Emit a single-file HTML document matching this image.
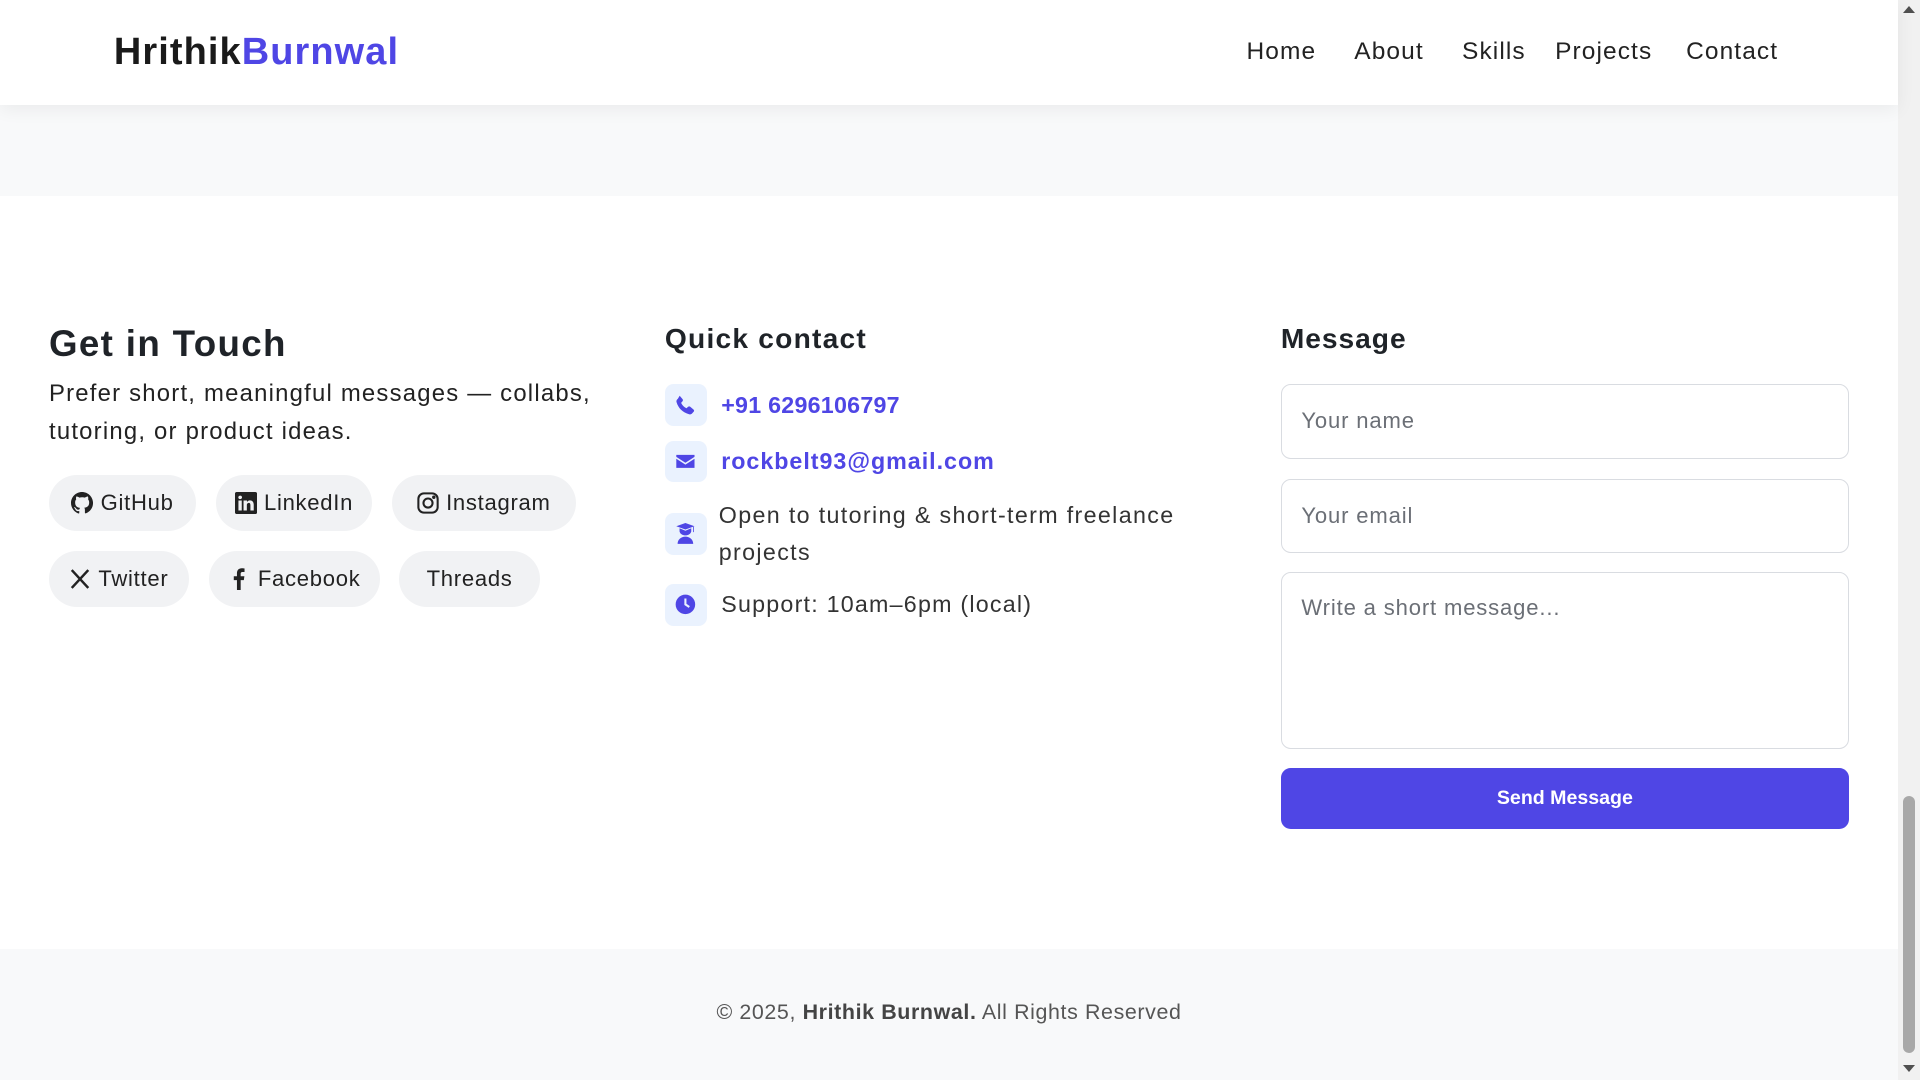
<!DOCTYPE html>
<html><head><meta charset="utf-8"><style>
html{zoom:1.22449}
*{box-sizing:border-box;margin:0;padding:0}
body{width:1568px;height:882px;overflow:hidden;position:relative;font-family:"Liberation Sans",sans-serif;color:#1f2328;background:#fff;letter-spacing:.6px}
.a{position:absolute}
header{position:absolute;left:0;top:0;width:1550px;height:86px;background:#fff;box-shadow:0 4px 14px rgba(0,0,0,.06);z-index:2}
.logo{left:93px;top:25px;font-size:31px;font-weight:bold;color:#1a1a1a;letter-spacing:.9px}
.logo span{color:#4f46e5}
nav a{position:absolute;top:31px;font-size:20px;color:#222;text-decoration:none;letter-spacing:.9px}
.chip{position:absolute;height:46px;border-radius:23px;background:#f1f2f4;font-size:18px;display:flex;align-items:center;justify-content:center;gap:6px;color:#222}
.chip svg{width:18px;height:18px}
.ib{position:absolute;left:543px;width:34px;height:34px;border-radius:7px;background:#eaf2fe;display:flex;align-items:center;justify-content:center}
.ib svg{width:17px;height:17px;fill:#4f46e5}
.inp{position:absolute;left:1046px;width:464px;border:1px solid #d9dce1;border-radius:8px;font-size:18px;color:#6b6f76;padding:0 16px;letter-spacing:.7px}
</style></head><body>
<header>
<div class="a logo">Hrithik<span>Burnwal</span></div>
<nav><a style="left:1018px">Home</a><a style="left:1106px">About</a><a style="left:1194px">Skills</a><a style="left:1270px">Projects</a><a style="left:1377px">Contact</a></nav>
</header>
<div class="a" style="left:0;top:86px;width:1550px;height:74px;background:#f8f9fa"></div>

<div class="a" style="left:40px;top:264px;font-size:30px;font-weight:bold;color:#1f2328;letter-spacing:1.1px">Get in Touch</div>
<div class="a" style="left:40px;top:306px;width:470px;font-size:19.5px;line-height:31px;color:#222;letter-spacing:1px">Prefer short, meaningful messages — collabs, tutoring, or product ideas.</div>

<div class="chip" style="left:40px;top:388px;width:120px"><svg viewBox="0 0 16 16"><path fill="#222" d="M8 0C3.6 0 0 3.6 0 8c0 3.5 2.3 6.5 5.5 7.6.4.1.5-.2.5-.4v-1.4c-2.2.5-2.7-1-2.7-1-.4-.9-.9-1.2-.9-1.2-.7-.5.1-.5.1-.5.8.1 1.2.8 1.2.8.7 1.3 1.9.9 2.4.7.1-.5.3-.9.5-1.1-1.8-.2-3.6-.9-3.6-4 0-.9.3-1.6.8-2.1-.1-.2-.4-1 .1-2.1 0 0 .7-.2 2.2.8.6-.2 1.3-.3 2-.3s1.4.1 2 .3c1.5-1 2.2-.8 2.2-.8.4 1.1.2 1.9.1 2.1.5.6.8 1.3.8 2.1 0 3.1-1.9 3.7-3.6 3.9.3.3.5.8.5 1.5v2.2c0 .2.1.5.6.4C13.7 14.5 16 11.5 16 8c0-4.4-3.6-8-8-8z"/></svg>GitHub</div>
<div class="chip" style="left:176px;top:388px;width:128px"><svg viewBox="0 0 16 16"><path fill="#222" d="M0 1.1C0 .5.5 0 1.2 0h13.6c.7 0 1.2.5 1.2 1.1v13.8c0 .6-.5 1.1-1.2 1.1H1.2C.5 16 0 15.5 0 14.9zm4.9 12.3V6.2H2.5v7.2zM3.7 5.2c.8 0 1.4-.6 1.4-1.3 0-.7-.5-1.3-1.3-1.3S2.4 3.2 2.4 3.9c0 .7.5 1.3 1.3 1.3zm4.9 8.2v-4c0-.2 0-.4.1-.6.2-.4.6-.9 1.3-.9.9 0 1.2.7 1.2 1.7v3.8h2.4V9.3c0-2.2-1.2-3.2-2.7-3.2-1.3 0-1.8.7-2.2 1.2V6.2H6.2v7.2z"/></svg>LinkedIn</div>
<div class="chip" style="left:320px;top:388px;width:150px"><svg viewBox="0 0 16 16" fill="none" stroke="#222" stroke-width="1.5"><rect x="1" y="1" width="14" height="14" rx="4"/><circle cx="8" cy="8" r="3.3"/><circle cx="12.2" cy="3.8" r=".5" fill="#222"/></svg>Instagram</div>
<div class="chip" style="left:40px;top:450px;width:114px"><svg viewBox="0 0 16 16"><path d="M2 1.5l12 13M14 1.5l-12 13" stroke="#222" stroke-width="1.8"/></svg>Twitter</div>
<div class="chip" style="left:171px;top:450px;width:139px"><svg viewBox="0 0 16 16"><path fill="#222" d="M9.2 16V8.8h2.3l.4-2.8H9.2V4.3c0-.8.3-1.4 1.4-1.4H12V.4C11.7.3 10.9.2 10 .2 7.9.2 6.5 1.5 6.5 3.8V6H4.2v2.8h2.3V16z"/></svg>Facebook</div>
<div class="chip" style="left:326px;top:450px;width:115px">Threads</div>

<div class="a" style="left:543px;top:264px;font-size:23px;font-weight:bold;letter-spacing:1px">Quick contact</div>
<div class="ib" style="top:314px"><svg viewBox="0 0 16 16"><path d="M3.6.6l2.2 2.6c.4.5.4 1.1 0 1.6L4.7 6.1c.8 1.8 2.2 3.2 4.1 4.1l1.3-1.2c.5-.4 1.1-.4 1.6 0l2.6 2.2c.5.4.5 1.1.1 1.6l-1.3 1.4c-.6.6-1.5.9-2.3.6C5.7 13.3 2.7 10.3 1.2 5.6.9 4.8 1.2 3.9 1.8 3.3L2.2 2.9z"/></svg></div>
<div class="a" style="left:589px;top:320px;font-size:19px;font-weight:bold;color:#4f46e5;letter-spacing:.2px">+91 6296106797</div>
<div class="ib" style="top:360px"><svg viewBox="0 0 16 16"><path d="M1 3h14v1.5L8 9 1 4.5z"/><path d="M1 6l7 4.5L15 6v7H1z"/></svg></div>
<div class="a" style="left:589px;top:366px;font-size:19px;font-weight:bold;color:#4f46e5;letter-spacing:.8px">rockbelt93@gmail.com</div>
<div class="ib" style="top:419px"><svg viewBox="0 0 16 16"><path d="M8 0L1 2.5 8 5l7-2.5zM3.5 4v2.5C4 8.5 6 9.5 8 9.5s4-1 4.5-3V4L8 6zM2 16c0-3 2.5-5.5 6-5.5s6 2.5 6 5.5zM14 3v4h.6V3z"/></svg></div>
<div class="a" style="left:587px;top:406px;width:400px;font-size:19px;line-height:30px;color:#333;letter-spacing:1.1px">Open to tutoring &amp; short-term freelance projects</div>
<div class="ib" style="top:477px"><svg viewBox="0 0 16 16"><circle cx="8" cy="8" r="7.5"/><path d="M8 3.5V8l3 2" stroke="#eaf2fe" stroke-width="1.6" fill="none"/></svg></div>
<div class="a" style="left:589px;top:483px;font-size:19px;color:#333;letter-spacing:1px">Support: 10am–6pm (local)</div>

<div class="a" style="left:1046px;top:264px;font-size:23px;font-weight:bold;letter-spacing:.8px">Message</div>
<div class="inp" style="top:314px;height:61px;line-height:59px">Your name</div>
<div class="inp" style="top:391px;height:61px;line-height:59px">Your email</div>
<div class="inp" style="top:467px;height:145px;padding-top:18px">Write a short message...</div>
<div class="a" style="left:1046px;top:627px;width:464px;height:50px;border-radius:8px;background:#4f46e5;color:#fff;font-weight:bold;font-size:16px;text-align:center;line-height:50px;letter-spacing:0">Send Message</div>

<div class="a" style="left:0;top:775px;width:1550px;height:107px;background:#f8f9fa"></div>
<div class="a" style="left:0;top:817px;width:1550px;text-align:center;font-size:17.5px;color:#555;letter-spacing:.5px">© 2025, <b style="color:#444">Hrithik Burnwal.</b> All Rights Reserved</div>

<div class="a" style="left:1550px;top:0;width:18px;height:882px;background:#f1f1f1"></div>
<div class="a" style="left:1554px;top:650px;width:10px;height:210px;border-radius:5px;background:#a8a8a8"></div>
<div class="a" style="left:1554px;top:5px;width:0;height:0;border-left:5px solid transparent;border-right:5px solid transparent;border-bottom:6px solid #505050"></div>
<div class="a" style="left:1554px;top:870px;width:0;height:0;border-left:5px solid transparent;border-right:5px solid transparent;border-top:6px solid #505050"></div>
</body></html>
